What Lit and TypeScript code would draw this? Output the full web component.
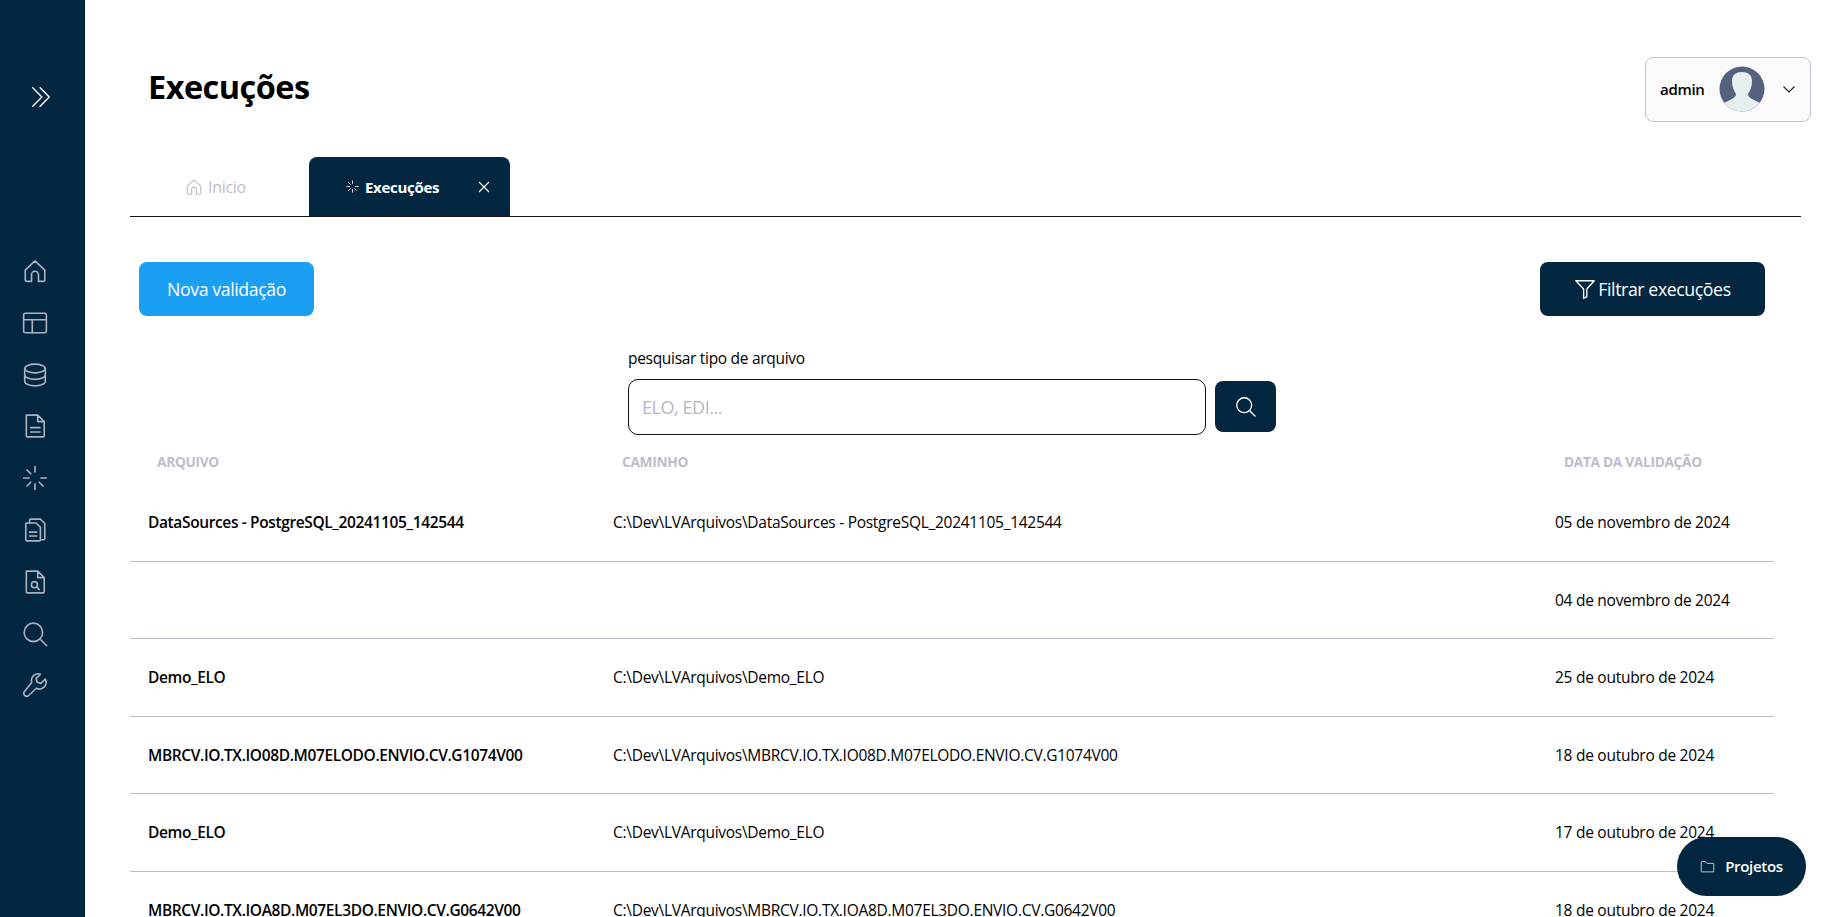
import { LitElement, html, css, svg } from "lit";
import { customElement } from "lit/decorators.js";

const ic = (w: number, body: unknown, cls = "") => html`<svg class=${cls} width=${w} height=${w} viewBox="0 0 24 24" fill="none" stroke="currentColor" stroke-width="1.5" stroke-linecap="round" stroke-linejoin="round">${body}</svg>`;

const home = svg`<path d="M3 11.200 12 2.600l9 8.600v9.200a1.200 1.200 0 0 1-1.200 1.200h-4.600v-6.200a3.200 3.200 0 0 0-6.400 0v6.200H4.200A1.200 1.200 0 0 1 3 20.400z"/>`;
const layout = svg`<rect x="1.500" y="3" width="21" height="18" rx="1.500"/><path d="M1.500 9h21M9.500 9v12"/>`;
const db = svg`<ellipse cx="12" cy="6" rx="9.500" ry="4"/><path d="M2.500 6v12c0 2.200 4.300 4 9.500 4s9.500-1.800 9.500-4V6M2.500 12c0 2.200 4.300 4 9.500 4s9.500-1.800 9.500-4"/>`;
const file = svg`<path d="M4 2h10.500L20.500 8v13a1 1 0 0 1-1 1H5a1 1 0 0 1-1-1V3a1 1 0 0 1 1-1zM14.500 2v6h6M8 13.500h8.500M8 17.500h8.500"/>`;
const spin = svg`<path d="M12 1.500v5M12 17.500v5M1.500 12h5M17.500 12h5M4.600 4.600l3.500 3.500M15.900 15.900l3.500 3.500M4.600 19.400l3.500-3.500"/>`;
const files = svg`<path d="M7 5.500V3a1 1 0 0 1 1-1h9l4 4v14a1 1 0 0 1-1 1h-2.500"/><path d="M3.500 6.500a1 1 0 0 1 1-1H13l4 4V21a1 1 0 0 1-1 1H4.500a1 1 0 0 1-1-1zM7 14h6.500M7 17.500h6.500"/>`;
const fileSearch = svg`<path d="M4 2h10.500L20.500 8v13a1 1 0 0 1-1 1H5a1 1 0 0 1-1-1V3a1 1 0 0 1 1-1zM14.500 2v6h6"/><circle cx="11.500" cy="14.500" r="2.800"/><path d="m13.600 16.600 2.400 2.400"/>`;
const search = svg`<circle cx="10.500" cy="10.500" r="8.500"/><path d="m16.800 16.800 6 6"/>`;
const wrench = svg`<path d="M21.500 6.500l-4 4-3.500-1-1-3.500 4-4a6.200 6.200 0 0 0-8 7.700L2.300 17.900a2.700 2.700 0 0 0 3.800 3.800l7.200-6.700a6.200 6.200 0 0 0 8.200-8.500z"/>`;

const rows = [
  ["DataSources - PostgreSQL_20241105_142544", "C:\\Dev\\LVArquivos\\DataSources - PostgreSQL_20241105_142544", "05 de novembro de 2024"],
  ["", "", "04 de novembro de 2024"],
  ["Demo_ELO", "C:\\Dev\\LVArquivos\\Demo_ELO", "25 de outubro de 2024"],
  ["MBRCV.IO.TX.IO08D.M07ELODO.ENVIO.CV.G1074V00", "C:\\Dev\\LVArquivos\\MBRCV.IO.TX.IO08D.M07ELODO.ENVIO.CV.G1074V00", "18 de outubro de 2024"],
  ["Demo_ELO", "C:\\Dev\\LVArquivos\\Demo_ELO", "17 de outubro de 2024"],
  ["MBRCV.IO.TX.IOA8D.M07EL3DO.ENVIO.CV.G0642V00", "C:\\Dev\\LVArquivos\\MBRCV.IO.TX.IOA8D.M07EL3DO.ENVIO.CV.G0642V00", "18 de outubro de 2024"],
];

@customElement("app-root")
export class AppRoot extends LitElement {
  static styles = css`
    :host { display: flex; height: 917px; overflow: hidden; font-family: "Open Sans", "Noto Sans", sans-serif; color: #000; background: #fff; letter-spacing: -0.3px; }
    * { box-sizing: border-box; }
    .side { width: 85px; flex: none; background: #032741; display: flex; flex-direction: column; }
    .toggle { color: #fff; height: 23px; margin: 86px 0 0 30px; }
    .nav { margin: 149px 0 0 22px; display: flex; flex-direction: column; gap: 25.800px; color: #aab3bd; }
    .nav svg { display: block; }
    .main { flex: 1; min-width: 0; padding-left: 45px; }
    .head { height: 157px; display: flex; justify-content: space-between; padding: 57px 14px 0 18px; }
    h1 { margin: 7px 0 0; font-size: 32.500px; line-height: 46px; font-weight: 700; letter-spacing: -0.55px; }
    .user { width: 166px; height: 65px; border: 1px solid #c3c1cf; border-radius: 8px; background: #fafafa; display: flex; align-items: center; padding: 0 0 2px 14px; font-size: 15px; font-weight: 600; }
    .avatar { margin-left: 14px; flex: none; }
    .chev { margin-left: 17px; flex: none; }
    .tabs { margin-right: 24px; height: 60px; border-bottom: 1px solid #111; display: flex; }
    .tab { width: 179px; display: flex; align-items: center; justify-content: center; gap: 5px; color: #bdbcc9; font-size: 16px; padding: 0 8px 0 0; }
    .tab.on { width: 201px; background: #032741; color: #fff; border-radius: 8px 8px 0 0; font-weight: 700; justify-content: flex-start; gap: 6px; padding: 0 0 0 37px; font-size: 15px; }
    .tab.on .x { margin-left: auto; margin-right: 20px; }
    .actions { display: flex; justify-content: space-between; margin: 45px 60px 0 9px; }
    .btn { height: 54px; border: 0; border-radius: 8px; color: #fff; font: inherit; font-size: 17.700px; display: flex; align-items: center; letter-spacing: -0.4px; padding-bottom: 1px; }
    .new { width: 175px; background: #1a9ff3; justify-content: center; }
    .filter { width: 225px; background: #032741; justify-content: center; gap: 2px; }
    .finder { margin: 30px 0 0 498px; }
    .finder label { display: block; font-size: 15.500px; line-height: 24px; letter-spacing: -0.3px; }
    .finder .line { display: flex; align-items: flex-start; gap: 9px; margin-top: 9px; }
    .input { width: 578px; height: 56px; border: 1.500px solid #111; border-radius: 10px; padding-left: 13px; display: flex; align-items: center; color: #b5b5c3; font-size: 18px; letter-spacing: -0.45px; }
    .go { width: 61px; height: 51px; margin-top: 2px; border-radius: 8px; background: #032741; color: #fff; display: flex; align-items: center; justify-content: center; }
    .cols { display: grid; grid-template-columns: 484px 941px 219px; width: 1644px; }
    .th { height: 49px; padding-top: 4px; font-size: 13.700px; font-weight: 700; color: #bdbcc9; align-items: center; }
    .th span:nth-child(1) { padding-left: 27px; }
    .th span:nth-child(2) { padding-left: 8px; }
    .th span:nth-child(3) { padding-left: 9px; }
    .row { height: 77.500px; align-items: center; border-bottom: 1px solid #bcbbc8; font-size: 15.500px; }
    .row span:nth-child(1) { padding-left: 18px; font-weight: 600; letter-spacing: -0.37px; }
    .row span:nth-child(2) { margin-left: -1px; letter-spacing: -0.28px; }
    .row span:nth-child(3) { letter-spacing: -0.27px; }
    .row:last-child { border-bottom: 0; }
    .fab { position: fixed; left: 1677px; top: 837px; width: 129px; height: 59px; padding-bottom: 1px; border-radius: 30px; background: #032741; color: #fff; font-size: 15px; font-weight: 600; display: flex; align-items: center; justify-content: center; gap: 10px; }
    .fab svg { color: #c4ccd4; }
  `;

  render() {
    return html`
      <aside class="side">
        <div class="toggle">${ic(22, svg`<path d="m3 2 10 10L3 22M11 2l10 10-10 10"/>`)}</div>
        <nav class="nav">
          ${[home, layout, db, file, spin, files, fileSearch, search, wrench].map((b) => ic(26, b))}
        </nav>
      </aside>
      <main class="main">
        <header class="head">
          <h1>Execuções</h1>
          <div class="user">
            <span>admin</span>
            <svg class="avatar" width="46" height="46" viewBox="0 0 46 46">
              <defs><clipPath id="av"><circle cx="23" cy="23" r="22.500"/></clipPath></defs>
              <g clip-path="url(#av)">
                <rect width="46" height="46" fill="#55617f"/>
                <path d="M13 15c0-6 4-9 10-9s10 3 10 9c0 6-2 10-4 13 0 2 1 3 4 5l8 4v9H5v-9l8-4c3-2 4-3 4-5-2-3-4-7-4-13z" fill="#e7eeee"/>
              </g>
            </svg>
            <svg class="chev" width="14" height="14" viewBox="0 0 14 14" fill="none" stroke="#222" stroke-width="1.200"><path d="m1.500 4.500 5.500 5.500 5.500-5.500"/></svg>
          </div>
        </header>
        <div class="tabs">
          <div class="tab">${ic(18, home)}<span>Inicio</span></div>
          <div class="tab on">
            ${ic(13, spin)}<span>Execuções</span>
            <svg class="x" width="12" height="12" viewBox="0 0 12 12" stroke="#fff" stroke-width="1.100"><path d="m1 1 10 10M11 1 1 11"/></svg>
          </div>
        </div>
        <div class="actions">
          <button class="btn new">Nova validação</button>
          <button class="btn filter">${ic(22, svg`<path d="M2 3h20l-8 9v8.500l-3.500 1.500v-10z"/>`)}Filtrar execuções</button>
        </div>
        <div class="finder">
          <label>pesquisar tipo de arquivo</label>
          <div class="line">
            <div class="input">ELO, EDI...</div>
            <div class="go">${ic(21, search)}</div>
          </div>
        </div>
        <div class="cols th"><span>ARQUIVO</span><span>CAMINHO</span><span>DATA DA VALIDAÇÃO</span></div>
        ${rows.map((r) => html`<div class="cols row"><span>${r[0]}</span><span>${r[1]}</span><span>${r[2]}</span></div>`)}
      </main>
      <div class="fab">
        ${ic(15, svg`<path d="M2 20V5a1 1 0 0 1 1-1h6l2 3h10a1 1 0 0 1 1 1v12z"/>`)}
        <span>Projetos</span>
      </div>
    `;
  }
}
